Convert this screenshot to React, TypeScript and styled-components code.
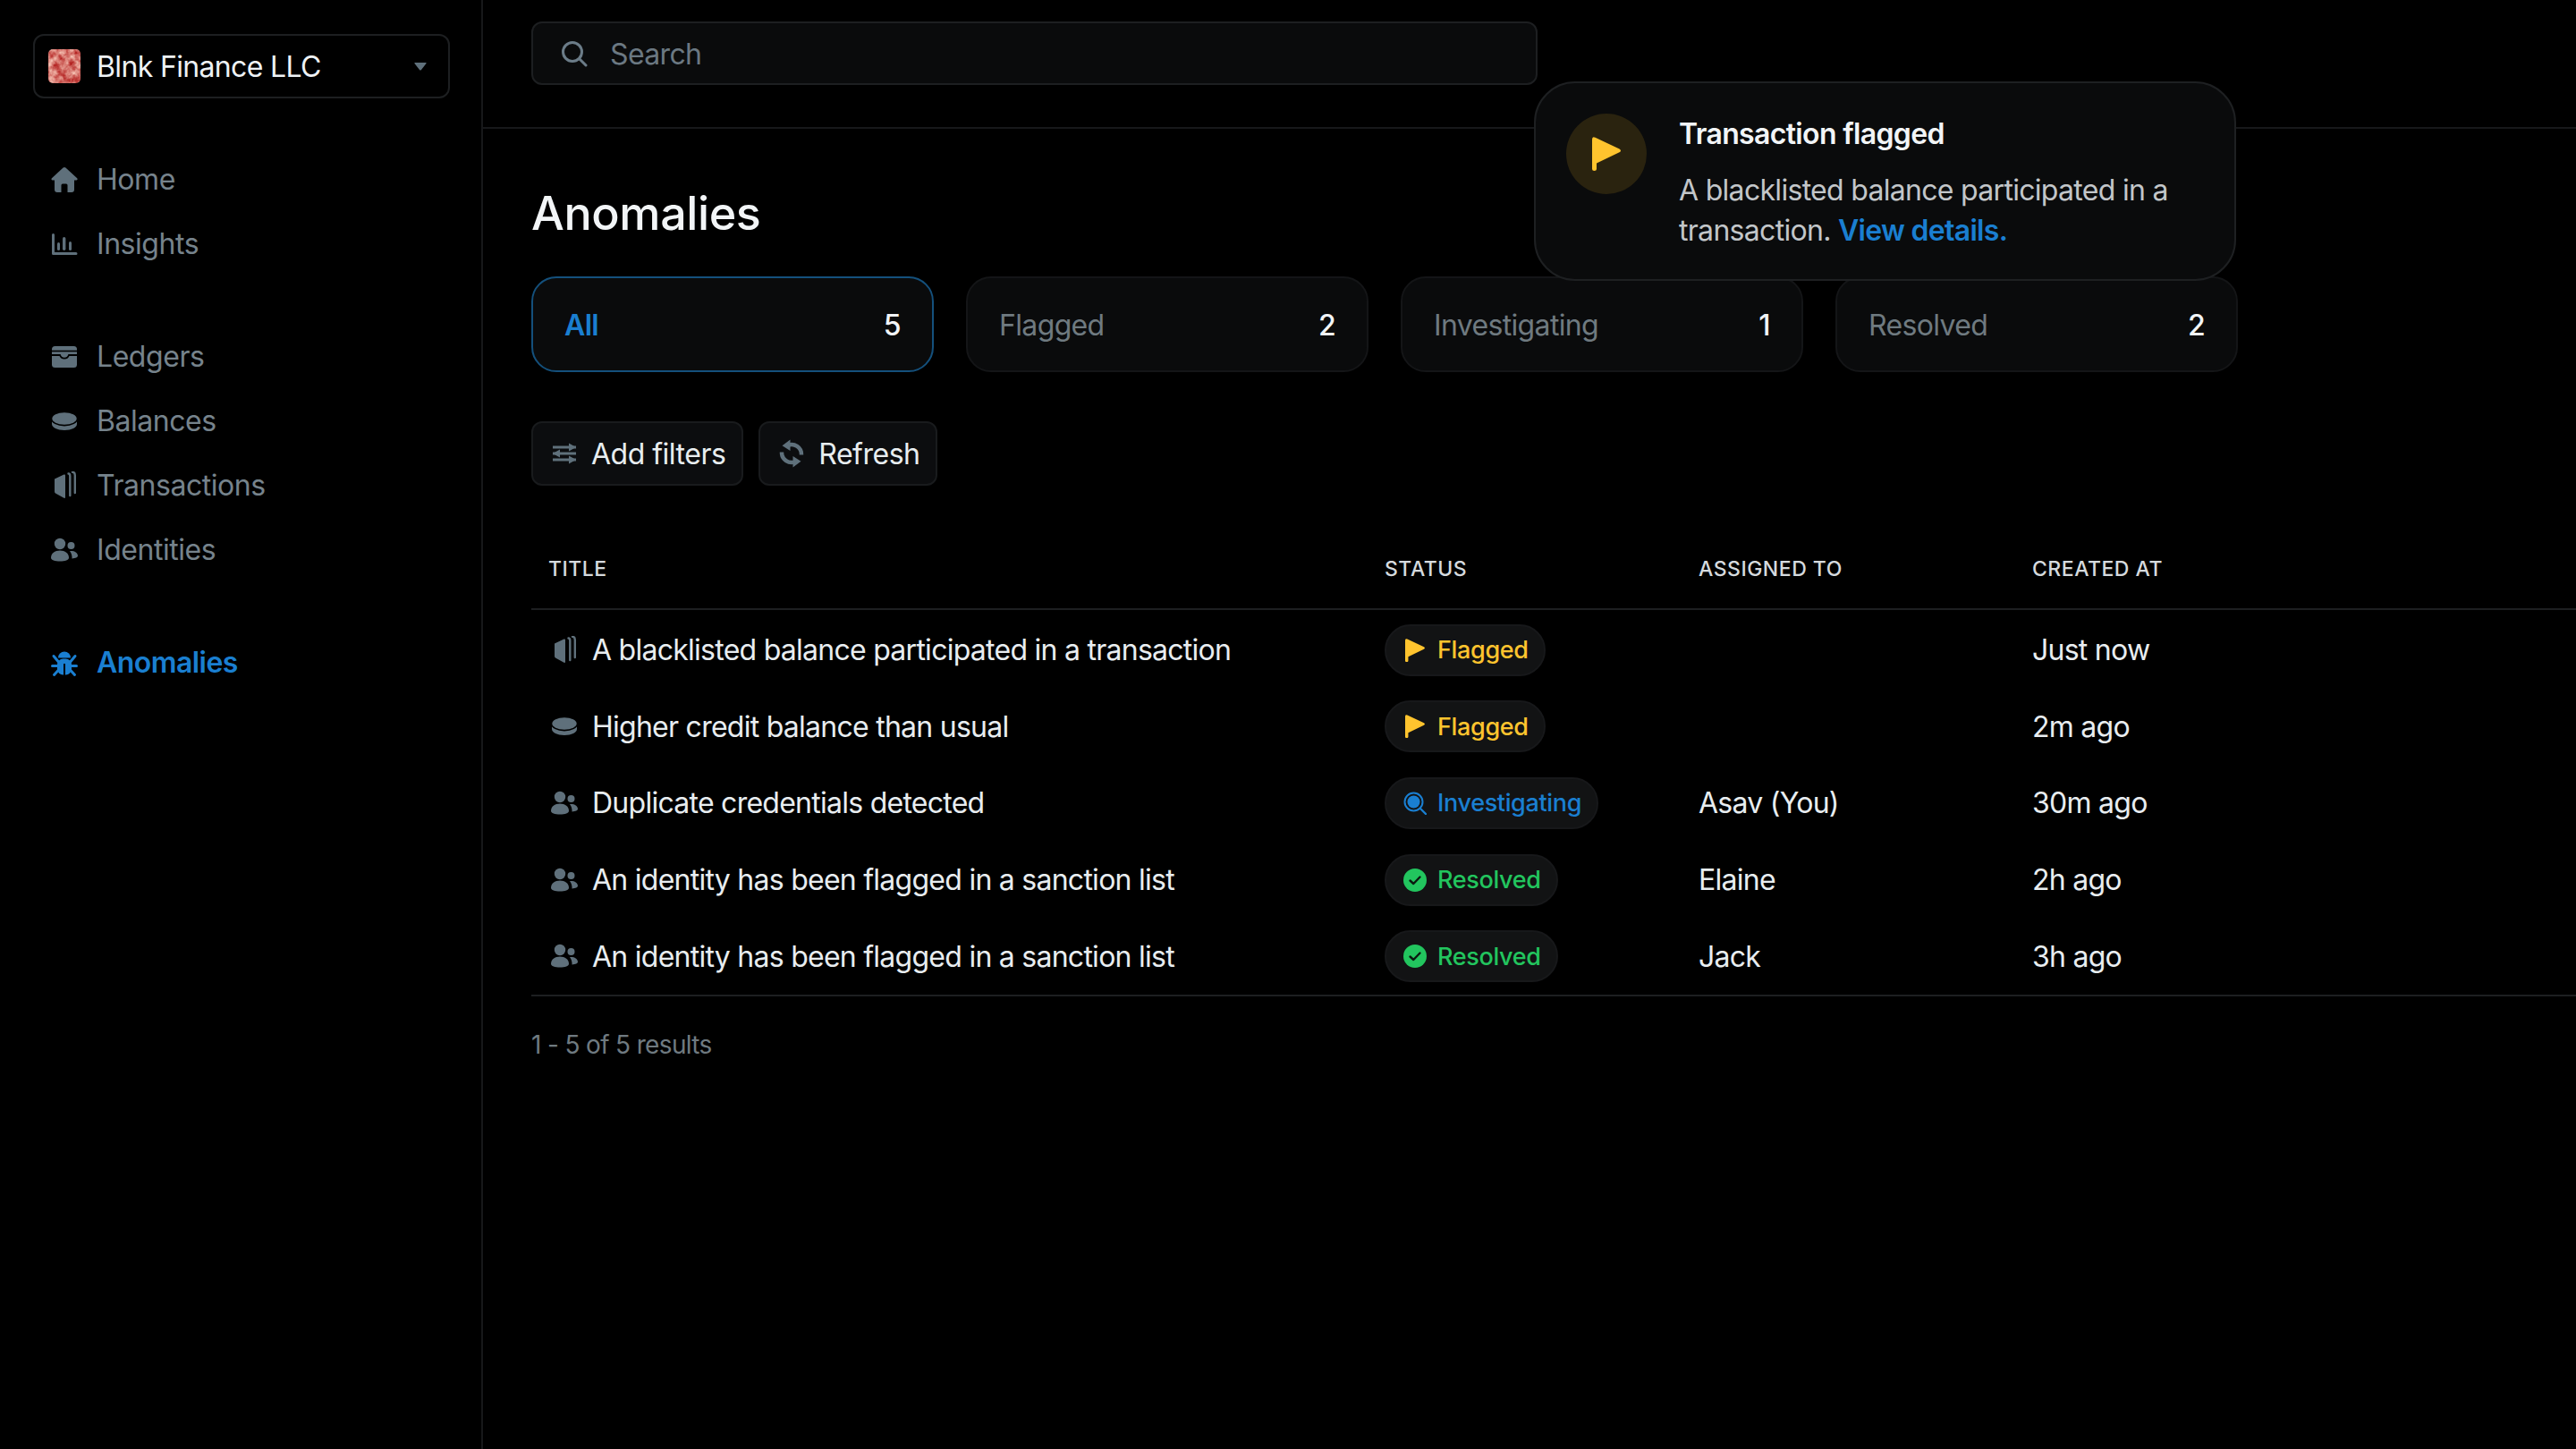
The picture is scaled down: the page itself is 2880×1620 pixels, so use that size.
import styled, { createGlobalStyle } from "styled-components";

const GlobalStyle = createGlobalStyle`
  html, body {
    margin: 0;
    background: #000;
    color: #eef2f5;
    font-family: Inter, "Liberation Sans", sans-serif;
    -webkit-font-smoothing: antialiased;
  }
  * { box-sizing: border-box; }
`;

const GREY = "#5f707b";
const BLUE = "#1a7fd1";
const YELLOW = "#ffc42e";
const GREEN = "#22c55e";

const Page = styled.div`
  display: flex;
  min-height: 100vh;
  background: #000;
  letter-spacing: -0.65px;
`;

const Sidebar = styled.aside`
  flex: 0 0 540px;
  display: flex;
  flex-direction: column;
  gap: 54px;
  padding: 38px 35px 0 37px;
  border-right: 2px solid #17181a;
`;

const Switcher = styled.div`
  display: flex;
  align-items: center;
  height: 72px;
  padding: 0 24px 0 15px;
  border: 2px solid #1d1f21;
  border-radius: 12px;
  font-size: 32px;
  color: #eef2f5;
`;

const SwitcherName = styled.span`
  flex: 1;
  margin-left: 18px;
`;

const NavGroup = styled.nav`
  display: flex;
  flex-direction: column;
`;

const NavItem = styled.div<{ $active?: boolean }>`
  display: flex;
  align-items: center;
  gap: 20px;
  height: 72px;
  padding: 1px 0 0 19px;
  font-size: 32px;
  letter-spacing: ${(p) => (p.$active ? "-0.55px" : "-0.45px")};
  font-weight: ${(p) => (p.$active ? 600 : 400)};
  color: ${(p) => (p.$active ? BLUE : "#76838c")};
`;

const Main = styled.main`
  position: relative;
  flex: 1;
  min-width: 0;
`;

const TopBar = styled.header`
  height: 144px;
  padding: 24px 0 0 54px;
  border-bottom: 2px solid #17181a;
`;

const SearchBox = styled.div`
  display: flex;
  align-items: center;
  gap: 25px;
  width: 1125px;
  height: 71px;
  padding: 1px 0 0 31px;
  background: #0a0b0c;
  border: 2px solid #1d1f21;
  border-radius: 12px;
  font-size: 32px;
  color: #6b7882;
`;

const Content = styled.div`
  padding: 65px 0 0 54px;
`;

const Title = styled.h1`
  margin: 0 0 40px;
  height: 60px;
  font-size: 52px;
  line-height: 60px;
  font-weight: 500;
  letter-spacing: -0.4px;
  color: #f2f5f7;
`;

const Tabs = styled.div`
  display: grid;
  grid-template-columns: repeat(4, 450px);
  gap: 36px;
`;

const Tab = styled.div<{ $active?: boolean }>`
  display: flex;
  align-items: center;
  justify-content: space-between;
  height: 107px;
  padding: 2px 35px 0;
  background: #0a0b0c;
  border: 2px solid ${(p) => (p.$active ? "#14507c" : "#141517")};
  border-radius: 28px;
  font-size: 32px;
`;

const TabLabel = styled.span<{ $active?: boolean }>`
  font-weight: ${(p) => (p.$active ? 600 : 400)};
  color: ${(p) => (p.$active ? BLUE : "#6f7a80")};
`;

const TabCount = styled.span`
  font-weight: 500;
  color: #f2f5f7;
`;

const Actions = styled.div`
  display: flex;
  gap: 17px;
  margin-top: 55px;
`;

const ActionButton = styled.div`
  display: flex;
  align-items: center;
  gap: 14px;
  height: 72px;
  padding: 0 18px 0 19px;
  background: #0c0d0f;
  border: 2px solid #191b1d;
  border-radius: 12px;
  font-size: 32px;
  letter-spacing: -0.5px;
  color: #e8edf0;
`;

const Columns = styled.div`
  display: grid;
  grid-template-columns: 935px 351px 373px 1fr;
  align-items: center;
`;

const TableHead = styled(Columns)`
  height: 91px;
  margin-top: 48px;
  border-bottom: 2px solid #1d1f21;
  font-size: 23px;
  font-weight: 500;
  letter-spacing: 0.5px;
  color: #d5dade;
`;

const HeadCell = styled.div`
  padding-left: 19px;
`;

const TableBody = styled.div`
  padding-top: 2px;
  border-bottom: 2px solid #1d1f21;
`;

const Row = styled(Columns)`
  height: 85.6px;
  font-size: 32px;
  letter-spacing: -0.74px;
  color: #e8edf0;
`;

const TitleCell = styled.div`
  display: flex;
  align-items: center;
  gap: 15px;
  padding-left: 21px;
`;

const Cell = styled.div`
  padding-left: 19px;
`;

const Badge = styled.span<{ $color: string }>`
  display: inline-flex;
  align-items: center;
  gap: 12px;
  height: 58px;
  padding: 0 17px 0 19px;
  background: #121314;
  border: 2px solid #17181a;
  border-radius: 29px;
  font-size: 27px;
  font-weight: 500;
  letter-spacing: -0.35px;
  color: ${(p) => p.$color};
`;

const BadgeIcon = styled.span`
  display: flex;
  align-items: center;
  justify-content: center;
  width: 26px;
  height: 26px;
`;

const Footer = styled.div`
  margin-top: 37px;
  font-size: 28px;
  line-height: 34px;
  color: #6f7a80;
`;

const Toast = styled.div`
  position: absolute;
  left: 1175px;
  top: 91px;
  display: flex;
  gap: 36px;
  width: 785px;
  height: 223px;
  padding: 34px 34px;
  background: #0a0b0c;
  border: 2px solid #1e2022;
  border-radius: 46px;
`;

const ToastIcon = styled.div`
  flex: 0 0 90px;
  display: flex;
  align-items: center;
  justify-content: center;
  height: 90px;
  border-radius: 50%;
  background: #2a230f;
`;

const ToastBody = styled.div`
  display: flex;
  flex-direction: column;
`;

const ToastTitle = styled.div`
  font-size: 32px;
  font-weight: 600;
  line-height: 46px;
  color: #f2f5f7;
`;

const ToastText = styled.div`
  margin-top: 17px;
  font-size: 32px;
  line-height: 45px;
  letter-spacing: -0.7px;
  color: #c2c6c9;
`;

const ToastLink = styled.span`
  font-weight: 600;
  color: ${BLUE};
`;

type IconProps = { color?: string };

const HomeIcon = ({ color = GREY }: IconProps) => (
  <svg width="32" height="32" viewBox="0 0 32 32" fill={color}>
    <path d="M14.6 2.6a2 2 0 0 1 2.8 0l12.8 11.6c.9.9.3 2.3-.9 2.3H27v10.5a3 3 0 0 1-3 3h-4.5v-8a1.5 1.5 0 0 0-1.5-1.5h-4a1.5 1.5 0 0 0-1.5 1.5v8H8a3 3 0 0 1-3-3V16.5H2.8c-1.2 0-1.8-1.4-.9-2.3z" />
  </svg>
);

const InsightsIcon = ({ color = GREY }: IconProps) => (
  <svg width="32" height="32" viewBox="0 0 32 32" fill={color}>
    <path d="M2 5.5a1.5 1.5 0 0 1 3 0V25h24a1.5 1.5 0 0 1 0 3H3.5A1.5 1.5 0 0 1 2 26.5z" />
    <rect x="8" y="14" width="3" height="9" rx="1.5" />
    <rect x="14" y="8" width="3.4" height="15" rx="1.7" />
    <rect x="21" y="13" width="3" height="10" rx="1.5" />
  </svg>
);

const LedgerIcon = ({ color = GREY }: IconProps) => (
  <svg width="32" height="32" viewBox="0 0 32 32" fill={color}>
    <rect x="2" y="4" width="28" height="24" rx="3.5" />
    <path d="M2 9.5h28" stroke="#000" strokeWidth="1.6" />
    <path d="M2 14h9c1 3 3 3.6 5 3.6s4-.6 5-3.6h9" fill="none" stroke="#000" strokeWidth="1.8" />
  </svg>
);

const BalanceIcon = ({ color = GREY }: IconProps) => (
  <svg width="32" height="32" viewBox="0 0 32 32" fill={color}>
    <path d="M2 13v6c0 4 6 7 14 7s14-3 14-7v-6z" />
    <ellipse cx="16" cy="13" rx="14.5" ry="7.6" stroke="#000" strokeWidth="1.6" />
  </svg>
);

const TransactionIcon = ({ color = GREY }: IconProps) => (
  <svg width="32" height="32" viewBox="0 0 32 32" fill={color}>
    <path d="M5 8.500 15.500 3.500q1.500-.5 1.500 1V29q0 1.300-1.500.8L6 24.500q-1-.5-1-2z" />
    <path d="M20.500 2.500c1.300 0 1.800 1 1.800 3V27M25 .8c1.800 0 2.800 1.400 2.800 3.500V24" fill="none" stroke={color} strokeWidth="2.400" strokeLinecap="round" />
  </svg>
);

const UsersIcon = ({ color = GREY }: IconProps) => (
  <svg width="32" height="32" viewBox="0 0 32 32" fill={color}>
    <circle cx="11" cy="9" r="6.200" />
    <path d="M1 24.500c0-5 4.300-8 10-8s10 3 10 8c0 2.600-4.300 4-10 4s-10-1.400-10-4z" />
    <circle cx="23.500" cy="11" r="4" />
    <path d="M22 17c4.500-.6 9 1.500 9 5.300 0 1.800-2.500 3-6.500 3.200.2-3.200-.6-6-2.500-8.500z" />
  </svg>
);

const BugIcon = ({ color = GREY }: IconProps) => (
  <svg width="32" height="32" viewBox="0 0 32 32" fill={color}>
    <path d="M9 10.500a7 7 0 0 1 14 0z" />
    <rect x="8" y="11.500" width="16" height="18" rx="6.500" />
    <path d="M9 14.500 4 8.500M23 14.500l5-6M9 19.500H2.500M23 19.500h6.500M9.500 24 4.500 29.500M22.500 24l5 5.500" stroke={color} strokeWidth="3" strokeLinecap="round" />
    <path d="M16 17v13" stroke="#000" strokeWidth="2" />
  </svg>
);

const SearchIcon = () => (
  <svg width="30" height="30" viewBox="0 0 30 30" fill="none" stroke="#6b7c88" strokeWidth="3">
    <circle cx="13" cy="13" r="10.500" />
    <path d="M21 21l7 7" strokeLinecap="round" />
  </svg>
);

const FilterIcon = () => (
  <svg width="32" height="32" viewBox="0 0 32 32" fill={GREY}>
    <path d="M3 7.500h26v3H3zM3 14.500h26v3H3zM3 21.500h26v3H3z" />
    <path d="M21 4.500 29 9l-8 4.500zM11 11.500 3 16l8 4.500zM21 18.500l8 4.500-8 4.500z" />
  </svg>
);

const RefreshHalf = () => (
  <>
    <path d="M27 17.500A11 11 0 0 0 11.500 7" fill="none" stroke={GREY} strokeWidth="4.500" />
    <path d="M14.500.500 5.500 7.200l9 5.800z" />
  </>
);

const RefreshIcon = () => (
  <svg width="32" height="32" viewBox="0 0 32 32" fill={GREY}>
    <RefreshHalf />
    <g transform="rotate(180 16 16)">
      <RefreshHalf />
    </g>
  </svg>
);

const FlagIcon = ({ size = 22 }: { size?: number }) => (
  <svg width={size} height={(size * 38) / 32} viewBox="0 0 32 38" fill={YELLOW}>
    <path d="M0 3Q0-1 3.500.800L30.500 13.500Q33.500 15.500 30.500 17.200L5 29.500V36a2.500 2 0 0 1-5 0z" />
  </svg>
);

const InvestigatingIcon = () => (
  <svg width="26" height="26" viewBox="0 0 26 26" fill={BLUE}>
    <circle cx="11.500" cy="11.500" r="10" fill="none" stroke={BLUE} strokeWidth="2" />
    <circle cx="11.500" cy="11.500" r="7" />
    <path d="M19 19l6 6" stroke={BLUE} strokeWidth="2.400" strokeLinecap="round" />
  </svg>
);

const ResolvedIcon = () => (
  <svg width="26" height="26" viewBox="0 0 26 26">
    <circle cx="13" cy="13" r="13" fill={GREEN} />
    <path d="M7.500 13.500l3.800 3.500 7.200-7.500" fill="none" stroke="#0b1a10" strokeWidth="2.400" strokeLinecap="round" strokeLinejoin="round" />
  </svg>
);

const CompanyLogo = () => (
  <svg width="36" height="38" viewBox="0 0 36 38">
    <defs>
      <filter id="marble" x="0" y="0" width="100%" height="100%" colorInterpolationFilters="sRGB">
        <feTurbulence type="fractalNoise" baseFrequency="0.13" numOctaves="3" seed="7" />
        <feColorMatrix values="0.5 0 0 0 0.58  1.2 0 0 0 -0.16  1.1 0 0 0 -0.14  0 0 0 0 1" />
      </filter>
      <clipPath id="logo-clip">
        <rect width="36" height="38" rx="5" />
      </clipPath>
    </defs>
    <g clipPath="url(#logo-clip)">
      <rect width="36" height="38" filter="url(#marble)" />
    </g>
  </svg>
);

const Caret = () => (
  <svg width="14" height="9" viewBox="0 0 14 9" fill={GREY}>
    <path d="M1 0h12q1 0 .5 1L8 8q-1 1-2 0L.5 1Q0 0 1 0z" />
  </svg>
);

const statusBadges = {
  flagged: { label: "Flagged", color: YELLOW, icon: <FlagIcon /> },
  investigating: { label: "Investigating", color: BLUE, icon: <InvestigatingIcon /> },
  resolved: { label: "Resolved", color: GREEN, icon: <ResolvedIcon /> },
};

const tabs = [
  { label: "All", count: 5, active: true },
  { label: "Flagged", count: 2 },
  { label: "Investigating", count: 1 },
  { label: "Resolved", count: 2 },
];

const anomalies = [
  { title: "A blacklisted balance participated in a transaction", Icon: TransactionIcon, status: "flagged", assignee: "", created: "Just now" },
  { title: "Higher credit balance than usual", Icon: BalanceIcon, status: "flagged", assignee: "", created: "2m ago" },
  { title: "Duplicate credentials detected", Icon: UsersIcon, status: "investigating", assignee: "Asav (You)", created: "30m ago" },
  { title: "An identity has been flagged in a sanction list", Icon: UsersIcon, status: "resolved", assignee: "Elaine", created: "2h ago" },
  { title: "An identity has been flagged in a sanction list", Icon: UsersIcon, status: "resolved", assignee: "Jack", created: "3h ago" },
] as const;

function App() {
  return (
    <>
      <GlobalStyle />
      <Page>
        <Sidebar>
          <Switcher>
            <CompanyLogo />
            <SwitcherName>Blnk Finance LLC</SwitcherName>
            <Caret />
          </Switcher>
          <NavGroup>
            <NavItem><HomeIcon />Home</NavItem>
            <NavItem><InsightsIcon />Insights</NavItem>
          </NavGroup>
          <NavGroup>
            <NavItem><LedgerIcon />Ledgers</NavItem>
            <NavItem><BalanceIcon />Balances</NavItem>
            <NavItem><TransactionIcon />Transactions</NavItem>
            <NavItem><UsersIcon />Identities</NavItem>
          </NavGroup>
          <NavGroup>
            <NavItem $active><BugIcon color={BLUE} />Anomalies</NavItem>
          </NavGroup>
        </Sidebar>

        <Main>
          <TopBar>
            <SearchBox>
              <SearchIcon />
              Search
            </SearchBox>
          </TopBar>

          <Content>
            <Title>Anomalies</Title>
            <Tabs>
              {tabs.map((tab) => (
                <Tab key={tab.label} $active={tab.active}>
                  <TabLabel $active={tab.active}>{tab.label}</TabLabel>
                  <TabCount>{tab.count}</TabCount>
                </Tab>
              ))}
            </Tabs>

            <Actions>
              <ActionButton><FilterIcon />Add filters</ActionButton>
              <ActionButton><RefreshIcon />Refresh</ActionButton>
            </Actions>

            <TableHead>
              <HeadCell>TITLE</HeadCell>
              <HeadCell>STATUS</HeadCell>
              <HeadCell>ASSIGNED TO</HeadCell>
              <HeadCell>CREATED AT</HeadCell>
            </TableHead>
            <TableBody>
              {anomalies.map(({ title, Icon, status, assignee, created }, i) => {
                const badge = statusBadges[status];
                return (
                  <Row key={i}>
                    <TitleCell><Icon />{title}</TitleCell>
                    <Cell>
                      <Badge $color={badge.color}>
                        <BadgeIcon>{badge.icon}</BadgeIcon>
                        {badge.label}
                      </Badge>
                    </Cell>
                    <Cell>{assignee}</Cell>
                    <Cell>{created}</Cell>
                  </Row>
                );
              })}
            </TableBody>
            <Footer>1 - 5 of 5 results</Footer>
          </Content>

          <Toast>
            <ToastIcon><FlagIcon size={32} /></ToastIcon>
            <ToastBody>
              <ToastTitle>Transaction flagged</ToastTitle>
              <ToastText>
                A blacklisted balance participated in a transaction.{" "}
                <ToastLink>View details.</ToastLink>
              </ToastText>
            </ToastBody>
          </Toast>
        </Main>
      </Page>
    </>
  );
}

export default App;
